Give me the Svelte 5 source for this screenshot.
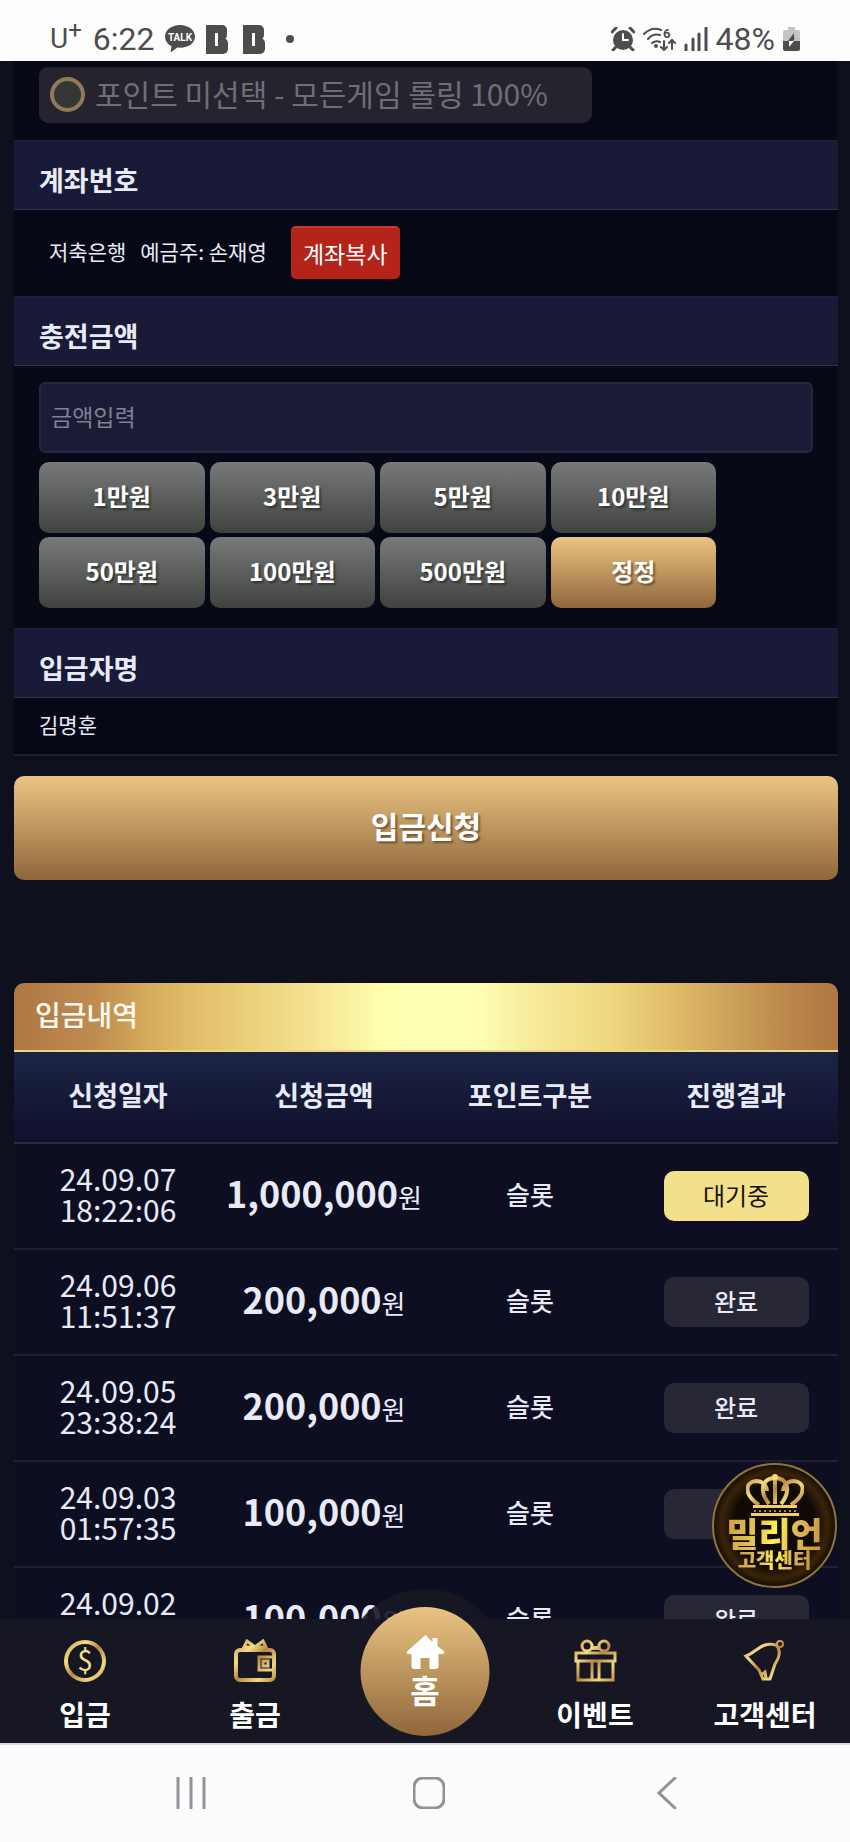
<script lang="ts">
	type Deposit = { date: string; time: string; amount: string; type: string; status: string };

	const presets = [
		{ label: '1만원', value: 10000 },
		{ label: '3만원', value: 30000 },
		{ label: '5만원', value: 50000 },
		{ label: '10만원', value: 100000 },
		{ label: '50만원', value: 500000 },
		{ label: '100만원', value: 1000000 },
		{ label: '500만원', value: 5000000 }
	];

	const deposits: Deposit[] = [
		{ date: '24.09.07', time: '18:22:06', amount: '1,000,000', type: '슬롯', status: '대기중' },
		{ date: '24.09.06', time: '11:51:37', amount: '200,000', type: '슬롯', status: '완료' },
		{ date: '24.09.05', time: '23:38:24', amount: '200,000', type: '슬롯', status: '완료' },
		{ date: '24.09.03', time: '01:57:35', amount: '100,000', type: '슬롯', status: '완료' },
		{ date: '24.09.02', time: '', amount: '100,000', type: '슬롯', status: '완료' }
	];

	const tabs = [
		{ id: 'deposit', label: '입금' },
		{ id: 'withdraw', label: '출금' },
		{ id: 'home', label: '홈' },
		{ id: 'event', label: '이벤트' },
		{ id: 'support', label: '고객센터' }
	];

	let amount = $state('');

	function add(value: number) {
		amount = String(Number(amount || 0) + value);
	}
</script>

<div class="phone">
	<header class="status-bar">
		<div class="status-group">
			<span class="carrier">U<sup>+</sup></span>
			<span class="clock">6:22</span>
			<svg class="talk" width="30" height="28" viewBox="0 0 30 28">
				<path d="M15 0C6.700 0 0 5 0 11.500c0 4.200 2.800 7.800 6.500 9.800L5.500 27.500l7-5C23 23.500 30 18.500 30 11.500 30 5 23.300 0 15 0z" />
				<text x="15" y="16" text-anchor="middle">TALK</text>
			</svg>
			{#each [1, 2] as n (n)}
				<svg class="app-mark" width="22" height="29" viewBox="0 0 22 29">
					<rect width="14" height="29" />
					<rect width="21" height="15" rx="5" />
					<rect y="13" width="22" height="16" rx="5" />
					<rect class="slit" x="9" y="8" width="3" height="13" />
				</svg>
			{/each}
			<span class="dot"></span>
		</div>
		<div class="status-group right">
			<svg width="24" height="24" viewBox="0 0 24 24">
				<circle cx="12" cy="13" r="10" />
				<path class="line" d="M1 5l4-4M23 5l-4-4M5 20l-3 3M19 20l3 3" />
				<path class="line light" d="M12 7v6h5" />
			</svg>
			<svg class="wifi" width="33" height="24" viewBox="0 0 33 24">
				<path class="line thin" d="M1 7Q9-1 18 3M5 12q5-6 12-4M9 16q4-3 8-1" />
				<circle cx="13" cy="19" r="2" />
				<text x="20" y="11">6</text>
				<path class="line thin" d="M21 14v8M18 20l3 3 3-3M29 22v-8M26 16l3-3 3 3" />
			</svg>
			<svg width="24" height="24" viewBox="0 0 24 24">
				<path class="line" d="M2 18v5M9 12v11M15 7v16M22 1v22" />
			</svg>
			<span class="clock">48%</span>
			<svg class="battery" width="17" height="24" viewBox="0 0 17 24">
				<path class="empty" d="M5 0h7v3h3q2 0 2 2v9H0V5q0-2 2-2h3z" />
				<path d="M0 14h17v8q0 2-2 2H2q-2 0-2-2z" />
				<path d="M11 6v5h1l-2 3H5z" />
				<path class="bolt" d="M6 14h5l-5 6z" />
			</svg>
		</div>
	</header>

	<div class="app">
		<main>
			<form class="panel" onsubmit={(e) => e.preventDefault()}>
				<div class="point-row">
					<label class="point-option">
						<input type="radio" name="point" disabled />
						<span>포인트 미선택 - 모든게임 롤링 100%</span>
					</label>
				</div>

				<h2>계좌번호</h2>
				<div class="account">
					<span class="bank">저축은행</span>
					<span class="holder">예금주: 손재영</span>
					<button type="button" class="copy">계좌복사</button>
				</div>

				<h2><label for="amount">충전금액</label></h2>
				<div class="charge">
					<input id="amount" class="amount-input" type="text" inputmode="numeric" placeholder="금액입력" bind:value={amount} />
					<div class="presets">
						{#each presets as preset (preset.value)}
							<button type="button" class="preset" onclick={() => add(preset.value)}>{preset.label}</button>
						{/each}
						<button type="button" class="preset reset" onclick={() => (amount = '')}>정정</button>
					</div>
				</div>

				<h2>입금자명</h2>
				<p class="depositor">김명훈</p>

				<button type="submit" class="submit">입금신청</button>
			</form>

			<section class="history">
				<h3>입금내역</h3>
				<table>
					<thead>
						<tr>
							<th>신청일자</th>
							<th>신청금액</th>
							<th>포인트구분</th>
							<th>진행결과</th>
						</tr>
					</thead>
					<tbody>
						{#each deposits as row (row.date)}
							<tr>
								<td class="date">
									<span>{row.date}</span>
									<span>{row.time}</span>
								</td>
								<td class="sum"><strong>{row.amount}</strong>원</td>
								<td>{row.type}</td>
								<td><span class="badge" class:waiting={row.status === '대기중'}>{row.status}</span></td>
							</tr>
						{/each}
					</tbody>
				</table>
			</section>
		</main>

		<button type="button" class="floating">
			<svg width="58" height="42" viewBox="0 0 58 42" aria-hidden="true">
				<g fill="none" stroke="url(#gold)" stroke-width="4">
					<path d="M13 31C-3 20-1 8 10 7c8 0 11 6 11 10M45 31C61 20 59 8 48 7c-8 0-11 6-11 10" />
					<path d="M23 30C12 16 17 4 29 4s17 12 6 26M29 4v26" />
				</g>
				<circle cx="29" cy="3" r="3" fill="#f6dc7c" />
				<path d="M7 31h44v3H7zM5 39h48v3H5z" fill="#f0cf6c" />
				<path d="M8 37h42" stroke="#b98a30" stroke-width="2" stroke-dasharray="2 3" />
			</svg>
			<span class="floating-name">밀리언</span>
			<span class="floating-sub">고객센터</span>
		</button>

		<nav class="tab-bar">
			{#each tabs as tab (tab.id)}
				<a href="#{tab.id}" class="tab" class:home={tab.id === 'home'}>
					{#if tab.id === 'home'}
						<span class="home-disc">
							<svg width="40" height="36" viewBox="0 0 40 36">
								<path d="M20 1 2 17q-2 3 1 3h3v12q0 3 3 3h6V24h9v11h6q3 0 3-3V20h4q3-1 1-3l-6-5V4h-5v4z" fill="#fff" />
							</svg>
							<span>{tab.label}</span>
						</span>
					{:else}
						<svg width="44" height="44" viewBox="0 0 44 44" fill="none" stroke="url(#gold)" stroke-width="4">
							{#if tab.id === 'deposit'}
								<circle cx="22" cy="22" r="19" />
								<text x="22" y="32" text-anchor="middle">$</text>
							{:else if tab.id === 'withdraw'}
								<rect x="3" y="11" width="38" height="30" rx="4" />
								<path d="M10 10l4-8 8 6 8-6 4 8M12 8h20M40 18H26v13h14M35 22h-5v5h5z" stroke-width="3" />
							{:else if tab.id === 'event'}
								<path d="M3 14h39v8H3zM5 22h35v19H5zM19 22v19M26 22v19" stroke-width="3" />
								<circle cx="14" cy="7" r="5" stroke-width="3" />
								<circle cx="31" cy="7" r="5" stroke-width="3" />
								<path d="M19 9h7" />
							{:else}
								<path d="M3 17C13 13 20 2 33 6c6 6 3 13-1 19l-5 15h-7l-4-9z" stroke-width="3" />
								<circle cx="37" cy="5" r="3" stroke-width="2" />
								<path d="M18 36l4-3 1 6" stroke-width="3" />
							{/if}
						</svg>
						<span>{tab.label}</span>
					{/if}
				</a>
			{/each}
		</nav>
	</div>

	<footer class="system-nav">
		<button type="button" aria-label="최근 앱">
			<svg width="32" height="32" viewBox="0 0 32 32"><path d="M3 1v30M16 1v30M29 1v30" /></svg>
		</button>
		<button type="button" aria-label="홈 화면">
			<svg width="32" height="32" viewBox="0 0 32 32"><rect x="1" y="1" width="30" height="30" rx="9" /></svg>
		</button>
		<button type="button" aria-label="뒤로">
			<svg width="32" height="32" viewBox="0 0 32 32"><path d="M24 1 8 16l16 15" /></svg>
		</button>
	</footer>

	<svg class="defs" width="0" height="0" aria-hidden="true">
		<linearGradient id="gold" gradientUnits="userSpaceOnUse" x1="0" y1="0" x2="44" y2="44">
			<stop offset="0" stop-color="#c58a48" />
			<stop offset="0.300" stop-color="#f3dd83" />
			<stop offset="0.500" stop-color="#b78645" />
			<stop offset="0.750" stop-color="#efd980" />
			<stop offset="1" stop-color="#b3773a" />
		</linearGradient>
	</svg>
</div>

<style>
	:global(body) {
		background: #0e101d;
	}

	.phone {
		display: flex;
		flex-direction: column;
		height: 100vh;
		font-family: 'Noto Sans CJK KR', 'Noto Sans', sans-serif;
		color: #e8eaf6;
		background: #0e101d;
	}

	.phone * {
		box-sizing: border-box;
	}

	button,
	input {
		font-family: inherit;
		margin: 0;
	}

	button {
		border: 0;
		padding: 0;
		cursor: pointer;
	}

	/* status bar */
	.status-bar {
		display: flex;
		justify-content: space-between;
		align-items: center;
		padding: 17px 50px 0;
		height: 61px;
		background: #fdfdfd;
		color: #4d4d4d;
		font-family: Roboto, sans-serif;
	}

	.status-group {
		display: flex;
		align-items: center;
		gap: 11px;
	}

	.status-group.right {
		gap: 8px;
	}

	.status-group svg {
		fill: #4d4d4d;
	}

	.carrier {
		font-size: 28px;
		line-height: 32px;
	}

	.carrier sup {
		font-size: 24px;
		line-height: 0;
	}

	.clock {
		font-size: 32px;
		line-height: 32px;
	}

	.talk text {
		fill: #fff;
		font-size: 10px;
		font-weight: 700;
	}

	.app-mark {
		margin-right: 4px;
	}

	.app-mark .slit,
	.battery .bolt {
		fill: #fff;
	}

	.battery .empty {
		fill: #c4c4c4;
	}

	.dot {
		width: 8px;
		height: 8px;
		margin-left: 6px;
		border-radius: 50%;
		background: #4d4d4d;
	}

	.line {
		fill: none;
		stroke: #4d4d4d;
		stroke-width: 3;
		stroke-linecap: round;
	}

	.line.thin {
		stroke-width: 2;
	}

	.line.light {
		stroke: #fff;
		stroke-width: 2;
	}

	.wifi text {
		font-size: 13px;
		font-weight: 700;
	}

	/* scrolling page */
	.app {
		position: relative;
		display: flex;
		flex-direction: column;
		flex: 1;
		min-height: 0;
	}

	main {
		flex: 1;
		min-height: 0;
		padding: 0 12px 0 14px;
		overflow-y: auto;
		scrollbar-width: none;
	}

	.point-row {
		padding: 6px 25px 17px;
		background: #080916;
	}

	.point-option {
		display: inline-flex;
		align-items: center;
		gap: 10px;
		height: 56px;
		padding: 0 44px 2px 11px;
		border-radius: 9px;
		background: #25242e;
		color: #6f6e77;
		font-size: 30px;
		line-height: 40px;
		vertical-align: top;
	}

	.point-option span {
		padding-bottom: 2px;
		white-space: nowrap;
	}

	.point-option input {
		appearance: none;
		flex: none;
		width: 35px;
		height: 35px;
		border: 4px solid #907a59;
		border-radius: 50%;
		background: #343733;
	}

	h2 {
		margin: 0;
		padding: 23px 25px 13px;
		border-top: 1px solid #202136;
		border-bottom: 1px solid #30324e;
		background: #181a38;
		font-size: 27px;
		line-height: 32px;
		font-weight: 700;
	}

	.account {
		display: flex;
		align-items: center;
		padding: 16px 35px 17px;
		background: #060915;
		font-size: 21px;
		line-height: 30px;
	}

	.bank,
	.holder {
		padding-bottom: 3px;
	}

	.holder {
		margin: 0 24px 0 14px;
	}

	.copy {
		width: 109px;
		height: 53px;
		padding-bottom: 2px;
		border-top: 2px solid #c43a35;
		border-radius: 5px;
		background: #b4241b;
		color: #fff;
		font-size: 23px;
		line-height: 32px;
	}

	.charge {
		padding: 16px 25px 20px;
		background: #080917;
	}

	.amount-input {
		display: block;
		width: 100%;
		height: 71px;
		padding: 0 10px 4px;
		border: 2px solid #25273f;
		border-radius: 6px;
		background: #191b37;
		color: #e8eaf6;
		font-size: 23px;
	}

	.amount-input::placeholder {
		color: #80828f;
		opacity: 1;
	}

	.presets {
		display: grid;
		grid-template-columns: repeat(4, 1fr);
		gap: 4px 5px;
		max-width: 677px;
		margin-top: 9px;
	}

	.preset {
		height: 71px;
		padding-bottom: 3px;
		border-radius: 10px;
		background: linear-gradient(#777a79, #40423f);
		color: #fff;
		font-size: 24px;
		font-weight: 700;
		line-height: 32px;
		text-shadow: 2px 2px 2px rgba(0, 0, 0, 0.4);
	}

	.preset.reset,
	.submit {
		background: linear-gradient(#eac482, #8f673b);
	}

	.depositor {
		margin: 0;
		padding: 11px 25px 15px;
		border-bottom: 2px solid #1d1e2b;
		background: #060915;
		font-size: 21px;
		line-height: 30px;
	}

	.submit {
		display: block;
		width: 100%;
		height: 104px;
		margin-top: 20px;
		padding-bottom: 6px;
		border-radius: 10px;
		color: #fff;
		font-size: 30px;
		font-weight: 700;
		line-height: 40px;
		text-shadow: 2px 2px 2px rgba(0, 0, 0, 0.4);
	}

	/* deposit history */
	.history {
		margin-top: 103px;
	}

	h3 {
		margin: 0;
		padding: 11px 21px 16px;
		border-bottom: 2px solid #ecd58b;
		border-radius: 10px 10px 0 0;
		background: linear-gradient(90deg, #ad7843, #c08c50 10%, #d4aa5a 16%, #e0bb68 21%, #ebd07a 29%, #f8e898 38%, #ffffb0 45%, #ffffb4 56%, #f7ea9a 63%, #efd880 72%, #e0bc68 80%, #c99d58 88%, #b98349 95%, #ad7843);
		color: #fffdf2;
		font-size: 28px;
		font-weight: 500;
		line-height: 40px;
	}

	table {
		width: 100%;
		border-collapse: collapse;
		table-layout: fixed;
		background: #0d0e22;
	}

	thead {
		background: linear-gradient(#1c2444, #0f102c);
	}

	th {
		height: 91px;
		padding: 0 0 5px 2px;
		border-bottom: 2px solid #2a2c42;
		font-size: 27px;
		font-weight: 700;
		line-height: 40px;
	}

	td {
		height: 106px;
		padding: 0 0 4px 2px;
		border-bottom: 2px solid #1f2132;
		font-size: 26px;
		font-weight: 500;
		line-height: 36px;
		text-align: center;
	}

	td:last-child {
		padding-bottom: 0;
	}

	.date {
		font-size: 30px;
		font-weight: 400;
		line-height: 31px;
	}

	.date span {
		display: block;
		height: 31px;
	}

	.sum {
		white-space: nowrap;
		font-weight: 400;
	}

	.sum strong {
		font-size: 36px;
		font-weight: 700;
	}

	.badge {
		display: block;
		width: 145px;
		margin: 0 auto;
		padding: 6px 0 8px;
		border-radius: 10px;
		background: #272736;
		font-size: 24px;
	}

	.badge.waiting {
		background: #f2e08a;
		color: #17120c;
		font-weight: 400;
	}

	/* floating support button */
	.floating {
		position: absolute;
		right: 13px;
		bottom: 155px;
		z-index: 2;
		display: flex;
		flex-direction: column;
		align-items: center;
		width: 125px;
		height: 125px;
		padding-top: 9px;
		border: 2px solid #8d7638;
		border-radius: 50%;
		background: radial-gradient(circle, #100a05 48%, #3a2408 62%, #1a1106 70%);
	}

	.floating svg {
		flex: none;
	}

	.floating span {
		flex: none;
		background: linear-gradient(100deg, #cf9d3c, #e8c95c 35%, #fff250 50%, #e0b95a 70%, #c9953a);
		background-clip: text;
		color: transparent;
		font-weight: 900;
		white-space: nowrap;
	}

	.floating-name {
		font-size: 35px;
		line-height: 34px;
	}

	.floating-sub {
		font-size: 20px;
		line-height: 20px;
	}

	/* bottom tabs */
	.tab-bar {
		position: relative;
		display: grid;
		grid-template-columns: repeat(5, 1fr);
		height: 124px;
		padding-top: 20px;
		background: #171723;
	}

	.tab {
		display: flex;
		flex-direction: column;
		align-items: center;
		gap: 12px;
		color: #fff;
		font-size: 28px;
		font-weight: 700;
		line-height: 38px;
		text-decoration: none;
	}

	.tab text {
		fill: #f3e08c;
		stroke: none;
		font-size: 28px;
		font-weight: 400;
	}

	/* disc rises above the bar, over the table */
	.home-disc {
		position: absolute;
		bottom: 7px;
		left: 50%;
		display: flex;
		flex-direction: column;
		align-items: center;
		width: 129px;
		height: 129px;
		padding-top: 27px;
		border-radius: 50%;
		background: linear-gradient(#eac482, #8f673b);
		box-shadow: 0 0 0 18px rgba(23, 23, 35, 0.9);
		clip-path: inset(-18px -18px 0 -18px);
		font-size: 32px;
		transform: translateX(-50%);
	}

	/* system navigation */
	.system-nav {
		display: flex;
		justify-content: center;
		gap: 2px;
		height: 99px;
		padding: 0 0 2px 8px;
		border-top: 2px solid #dcdce4;
		background: #fcfbfe;
	}

	.system-nav button {
		display: flex;
		flex: 0 0 28%;
		align-items: center;
		justify-content: center;
		background: none;
	}

	.system-nav svg {
		fill: none;
		stroke: #929295;
		stroke-width: 3;
		stroke-linecap: round;
	}

	.defs {
		position: absolute;
	}
</style>
